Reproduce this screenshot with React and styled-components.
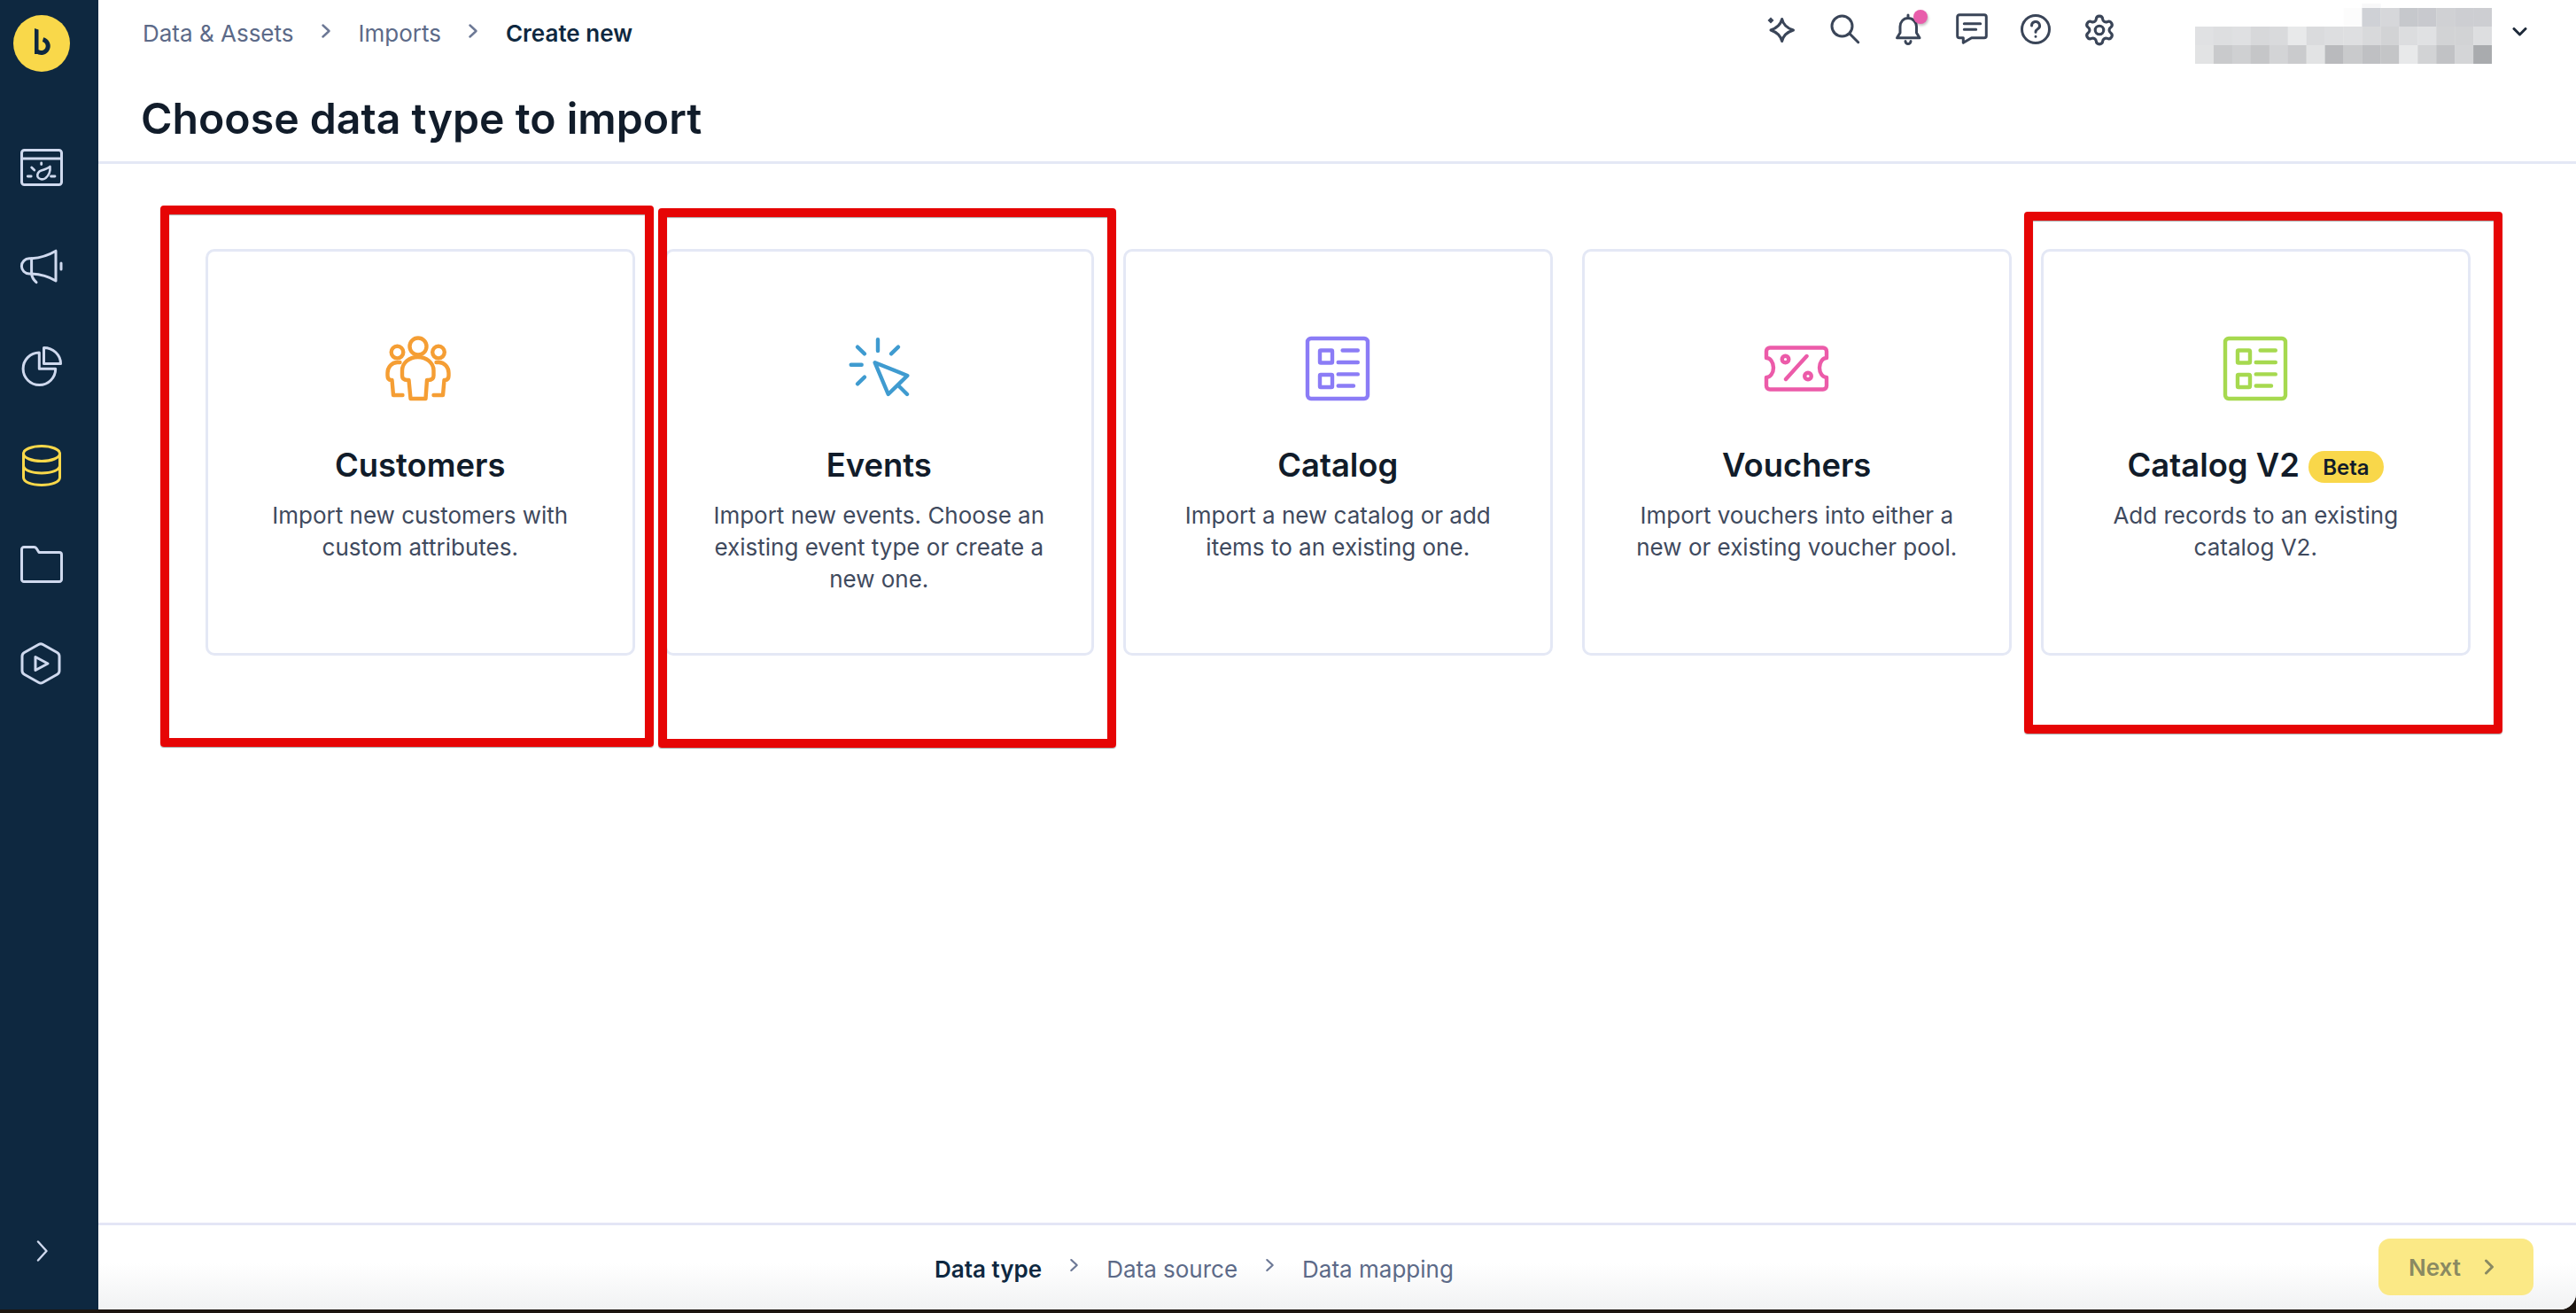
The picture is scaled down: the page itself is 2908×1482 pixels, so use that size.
import React from "react";
import styled, { createGlobalStyle } from "styled-components";
import { Settings } from "lucide-react";

const GlobalStyle = createGlobalStyle`
  html, body {
    margin: 0;
    height: 100%;
    background: #1c1510;
    font-family: "Inter", "Liberation Sans", sans-serif;
  }
  * { box-sizing: border-box; }
`;

const Shell = styled.div`
  position: relative;
  display: flex;
  width: 2908px;
  height: 1478px;
  background: #fff;
  border-bottom-right-radius: 18px;
  overflow: hidden;
`;

const Sidebar = styled.nav`
  width: 111px;
  flex-shrink: 0;
  background: #0e2840;
  display: flex;
  flex-direction: column;
  align-items: flex-start;
  padding: 17px 0 0 15px;
`;

const LogoMark = styled.svg`
  width: 64px;
  height: 64px;
  display: block;
  margin-bottom: 52px;
`;

const NavSlot = styled.div`
  width: 64px;
  height: 112px;
  display: flex;
  align-items: center;
  justify-content: center;
  color: ${(p) => (p.$active ? "#f9d84a" : "#cfd9ee")};

  svg {
    overflow: visible;
  }
`;

const Collapse = styled.div`
  margin-top: auto;
  margin-bottom: 54px;
  margin-left: 26px;
  height: 24px;
  color: #cfd9ee;
`;

const Main = styled.main`
  flex: 1;
  min-width: 0;
  display: flex;
  flex-direction: column;
`;

const Header = styled.header`
  height: 185px;
  border-bottom: 3px solid #e4e8f5;
  padding-left: 50px;
`;

const TopRow = styled.div`
  height: 74px;
  display: flex;
  align-items: flex-start;
`;

const Crumbs = styled.div`
  display: flex;
  align-items: center;
  height: 74px;
  font-size: 26px;
  color: #5c6a88;
`;

const Crumb = styled.span`
  font-weight: ${(p) => (p.$current ? 600 : 400)};
  color: ${(p) => (p.$current ? "#0e2840" : "#5c6a88")};
`;

const CrumbChevron = styled.svg`
  width: 12px;
  height: 16px;
  margin: -4px 31px 0 30px;
  color: #6c7895;
`;

const TopActions = styled.div`
  margin-left: auto;
  display: flex;
  align-items: center;
  height: 66px;
`;

const ActionSlot = styled.div`
  position: relative;
  width: 72px;
  height: 36px;
  display: flex;
  justify-content: center;
  color: #3a4558;
`;

const NotifyDot = styled.span`
  position: absolute;
  left: 42px;
  top: -4px;
  width: 16px;
  height: 16px;
  border-radius: 50%;
  background: #e85dab;
  box-shadow: 1px 2px 3px rgba(0, 0, 0, 0.25);
`;

const Mosaic = styled.svg`
  display: block;
  width: 335px;
  height: 72px;
  margin-left: 72px;
`;

const UserChevron = styled.svg`
  width: 17px;
  height: 10px;
  margin: 31px 55px 0 23px;
  color: #1e2a3a;
`;

const PageTitle = styled.h1`
  margin: 29px 0 0 -2px;
  font-size: 48.2px;
  line-height: 62px;
  font-weight: 600;
  color: #111c2a;
`;

const CardGrid = styled.section`
  flex: 1;
  display: grid;
  grid-template-columns: repeat(5, 485.5px);
  column-gap: 32.5px;
  align-content: start;
  padding: 96px 0 0 120.5px;
`;

const Card = styled.article`
  height: 459px;
  border: 3px solid #e4e8f5;
  border-radius: 10px;
  padding: 96px 44px 0;
  display: flex;
  flex-direction: column;
  align-items: center;
  text-align: center;
`;

const CardIcon = styled.svg`
  width: 72px;
  height: 72px;
  display: block;
  overflow: visible;
  color: ${(p) => p.$color};
  fill: none;
  stroke: currentColor;
  stroke-width: 4.4;
  stroke-linecap: round;
  stroke-linejoin: round;
`;

const CardTitle = styled.h2`
  margin: 50px 0 0;
  display: flex;
  align-items: center;
  gap: 10px;
  height: 46px;
  font-size: 36.4px;
  font-weight: 600;
  color: #111c2a;
`;

const BetaBadge = styled.span`
  display: inline-flex;
  align-items: center;
  justify-content: center;
  width: 85px;
  height: 36px;
  margin-top: 4px;
  border-radius: 18px;
  background: #f9d74a;
  font-size: 24px;
  font-weight: 600;
  color: #111c2a;
`;

const CardText = styled.p`
  margin: 16px 0 0;
  font-size: 26px;
  line-height: 36.2px;
  color: #3f4a5e;
`;

const Footer = styled.footer`
  height: 98px;
  flex-shrink: 0;
  border-top: 3px solid #e4e6f6;
  background: linear-gradient(to bottom, #fff 45%, #f1f2f3 100%);
  display: flex;
  align-items: center;
  padding: 0 48px 0 944px;
`;

const Steps = styled.div`
  display: flex;
  align-items: center;
  margin-top: 3px;
  font-size: 26px;
`;

const Step = styled.span`
  font-weight: ${(p) => (p.$current ? 600 : 400)};
  color: ${(p) => (p.$current ? "#0e2840" : "#5c6a88")};
`;

const StepChevron = styled.svg`
  width: 11px;
  height: 16px;
  margin: -8px 31px 0 31px;
  color: #6c7895;
`;

const NextButton = styled.button`
  margin-left: auto;
  margin-top: -1px;
  width: 175px;
  height: 64px;
  border: 0;
  border-radius: 13px;
  padding: 0 10px 0 0;
  background: #fbe986;
  color: #8a8a62;
  font-family: inherit;
  font-size: 26px;
  font-weight: 600;
  display: flex;
  align-items: center;
  justify-content: center;
  gap: 26px;
`;

const Annotation = styled.div`
  position: absolute;
  left: ${(p) => p.$x}px;
  top: ${(p) => p.$y}px;
  width: ${(p) => p.$w}px;
  height: ${(p) => p.$h}px;
  border: 10px solid #e60505;
  border-radius: 4px;
  box-shadow: 0 1px 1px rgba(0, 0, 0, 0.35), inset 0 1px 1px rgba(0, 0, 0, 0.35);
  pointer-events: none;
`;

const Line = ({ d, w = 3 }) => (
  <path d={d} fill="none" stroke="currentColor" strokeWidth={w} strokeLinecap="round" strokeLinejoin="round" />
);

const Chevron = ({ as: Comp, ...rest }) => (
  <Comp viewBox="0 0 12 16" {...rest}>
    <Line d="M2.5 1.5L9.5 8L2.5 14.5" w={2.4} />
  </Comp>
);

const CatalogIcon = ({ color }) => (
  <CardIcon viewBox="0 0 72 72" $color={color}>
    <rect x="2" y="2" width="68" height="68" rx="4" />
    <rect x="16" y="15.5" width="14" height="14" rx="1" />
    <rect x="16" y="43" width="14" height="14" rx="1" />
    <path d="M41.6 15.5H58.8M36.7 29H58.8M36.7 42.4H58.8M36.7 55.5H54" />
  </CardIcon>
);

const cards = [
  {
    title: "Customers",
    text: "Import new customers with custom attributes.",
    icon: (
      <CardIcon viewBox="2.5 0 72 72" $color="#f59e34">
        <circle cx="36.5" cy="11" r="9.5" />
        <circle cx="13" cy="17.6" r="6.8" />
        <circle cx="59.5" cy="17.6" r="6.8" />
        <path d="M18.5 44v-6a17.7 15 0 0 1 35.5 0v6q0 5-6 5h-1.5L45 70H28L26 49h-1.5q-6 0-6-5z" />
        <path d="M16 29h-3A11 12 0 0 0 2 41v3q0 5 4 5h1L8.5 66H19" />
        <path d="M57 29h3a11 12 0 0 1 11 12v3q0 5-4 5h-1L64.5 66H54" />
      </CardIcon>
    ),
  },
  {
    title: "Events",
    text: "Import new events. Choose an existing event type or create a new one.",
    icon: (
      <CardIcon viewBox="0 0 72 72" $color="#3f9bd0">
        <path d="M35 3.3V16M58 11.7L50 19.3M12 11.7L20 19.3M4.7 31.7H16.7M12 53.3L20 45.7" />
        <path d="M31.7 29.3L68.3 44L46.7 65z" />
        <path d="M58 55L68 65" />
      </CardIcon>
    ),
  },
  {
    title: "Catalog",
    text: "Import a new catalog or add items to an existing one.",
    icon: <CatalogIcon color="#8b7cf6" />,
  },
  {
    title: "Vouchers",
    text: "Import vouchers into either a new or existing voucher pool.",
    icon: (
      <CardIcon viewBox="0 0 72 72" $color="#ec5ba9">
        <path d="M6 12.5H66a4 4 0 0 1 4 4V24a8 11 0 0 0 0 22v9.5a4 4 0 0 1-4 4H6a4 4 0 0 1-4-4V46a8 11 0 0 0 0-22V16.5a4 4 0 0 1 4-4z" />
        <path d="M47.5 22L24 48" />
        <circle cx="23.5" cy="25.5" r="3.8" />
        <circle cx="49" cy="44.5" r="3.8" />
      </CardIcon>
    ),
  },
  {
    title: "Catalog V2",
    beta: true,
    text: "Add records to an existing catalog V2.",
    icon: <CatalogIcon color="#a6d94f" />,
  },
];

const mosaicRows = [
  [null, null, null, null, null, null, null, null, null, "#f8f8f9"],
  [null, null, null, null, null, null, null, null, "#fcfcfc", "#cfd1d6", "#d6d7da", "#c6c8cc", "#c8c9ce", "#d0d1d4", "#cdced2", "#cdced2"],
  ["#e0e1e3", "#dddee0", "#dfe0e2", "#d7d8da", "#d9dadc", "#e8e9ea", "#dadbdd", "#dddee0", "#dedfe1", "#d8d9db", "#d2d3d5", "#dcdddf", "#e0e1e3", "#d2d3d5", "#d2d3d5", "#dddee0"],
  ["#e2e3e4", "#c9cacc", "#cfd0d2", "#c5c6c8", "#d3d4d6", "#cacbcd", "#e2e3e4", "#b9babd", "#c9cacc", "#bfc0c3", "#c4c5c7", "#e8e9ea", "#d2d3d5", "#c1c2c5", "#d4d5d7", "#a9abae"],
];
const mosaicRowTop = [4, 9, 30, 51];
const mosaicRowH = [5, 21, 21, 21];

const annotations = [
  { x: 181, y: 232, w: 557, h: 611 },
  { x: 743, y: 235, w: 517, h: 609 },
  { x: 2285, y: 239, w: 540, h: 589 },
];

const App = () => (
  <>
    <GlobalStyle />
    <Shell>
      <Sidebar>
        <LogoMark viewBox="0 0 64 64">
          <circle cx="32" cy="32" r="32" fill="#f9d84a" />
          <path d="M24 15l4.5 1.6V44H24z" fill="#0e2840" />
          <path d="M33.5 27.6A7.6 7.6 0 1 1 27 41" fill="none" stroke="#0e2840" strokeWidth="5" />
        </LogoMark>
        <NavSlot>
          <svg width="48" height="42" viewBox="0 0 48 42">
            <rect x="1.5" y="1.5" width="45" height="39" rx="3" fill="none" stroke="currentColor" strokeWidth="3" />
            <Line d="M1.5 11H46.5" />
            <Line d="M8.3 31H12.2M34.5 31H39M12.7 21L15.8 24M23.7 16V17.5" w={2.8} />
            <Line d="M33.5 20C34 25 32 30 28.5 33C25 35.5 21 34.5 19.5 31.5C18.5 28.5 20.5 25.5 23.5 24.5C27 23.5 31 22 33.5 20z" w={2.6} />
          </svg>
        </NavSlot>
        <NavSlot>
          <svg width="48" height="38" viewBox="0 0 48 38">
            <Line d="M12.6 9.8C22 9 32 6 40 1.2V35C32 30 22 27.4 12.6 27H10A8.6 8.6 0 0 1 10 9.8z" />
            <Line d="M12.6 9.8V27C13 31 15 34 18 36.7M46 15V22" />
          </svg>
        </NavSlot>
        <NavSlot>
          <svg width="45" height="45" viewBox="0 0 45 45">
            <Line d="M19.3 7A18.3 18.3 0 1 0 37.7 25.3H19.3z" />
            <Line d="M24.5 1.5V19.5H43.5A19 18 0 0 0 24.5 1.5z" />
          </svg>
        </NavSlot>
        <NavSlot $active>
          <svg width="44" height="47" viewBox="0 0 44 47">
            <ellipse cx="22" cy="10" rx="20.5" ry="8.5" fill="none" stroke="currentColor" strokeWidth="3" />
            <Line d="M1.5 10V37c0 5 9 8.5 20.5 8.5S42.5 42 42.5 37V10M1.5 23.5c0 5 9 8.5 20.5 8.5s20.5-3.5 20.5-8.5" />
          </svg>
        </NavSlot>
        <NavSlot>
          <svg width="48" height="42" viewBox="0 0 48 42">
            <Line d="M4 1.5H15.5a3 3 0 0 1 2.5 1.3L21 7.5H44a2.5 2.5 0 0 1 2.5 2.5V38a2.5 2.5 0 0 1-2.5 2.5H4A2.5 2.5 0 0 1 1.5 38V4A2.5 2.5 0 0 1 4 1.5z" />
          </svg>
        </NavSlot>
        <NavSlot>
          <svg width="45" height="48" viewBox="1.5 0 45 48">
            <Line d="M20 2.5a5 5 0 0 1 5 0l16 9a5 5 0 0 1 2.5 4.3V32a5 5 0 0 1-2.5 4.3l-16 9a5 5 0 0 1-5 0l-16-9A5 5 0 0 1 1.5 32V15.8a5 5 0 0 1 2.5-4.3z" />
            <Line d="M16.5 16.5V31.5L30.5 24z" />
          </svg>
        </NavSlot>
        <Collapse>
          <svg width="14" height="24" viewBox="0 0 14 24">
            <Line d="M2 1.5L11.5 12L2 22.5" w={2.4} />
          </svg>
        </Collapse>
      </Sidebar>

      <Main>
        <Header>
          <TopRow>
            <Crumbs>
              <Crumb>Data &amp; Assets</Crumb>
              <Chevron as={CrumbChevron} />
              <Crumb>Imports</Crumb>
              <Chevron as={CrumbChevron} />
              <Crumb $current>Create new</Crumb>
            </Crumbs>
            <TopActions>
              <ActionSlot>
                <svg width="36" height="36" viewBox="0 0 36 36">
                  <Line d="M19.7 6.5C21 13 26 17 32.5 19C26 21 21 25 19.7 31.5C18 25 13 21 7 19C13 17 18 13 19.7 6.5z" />
                  <path d="M7 4.5L10.5 8L7 11.5L3.5 8z" fill="currentColor" />
                </svg>
              </ActionSlot>
              <ActionSlot>
                <svg width="36" height="36" viewBox="0 0 36 36">
                  <circle cx="15.5" cy="14.5" r="11.5" fill="none" stroke="currentColor" strokeWidth="3" />
                  <Line d="M24 23L33.7 32.7" />
                </svg>
              </ActionSlot>
              <ActionSlot>
                <svg width="36" height="36" viewBox="0 0 36 36">
                  <Line d="M18 5.5C12.5 5.5 9 10 9 15V22L5.5 27.7H31L27.5 22V15C27.5 10 23.5 5.5 18 5.5zM18 2V5.5M15 31.5a3 3 0 0 0 6 0" />
                </svg>
                <NotifyDot />
              </ActionSlot>
              <ActionSlot>
                <svg width="36" height="36" viewBox="0 0 36 36">
                  <Line d="M4 1.7H32a2.3 2.3 0 0 1 2.3 2.3V25.4a2.3 2.3 0 0 1-2.3 2.3H17.7L8.3 33.3V27.7H4a2.3 2.3 0 0 1-2.3-2.3V4A2.3 2.3 0 0 1 4 1.7z" />
                  <Line d="M9.3 11.7H27.7M9.3 18.3H22.7" />
                </svg>
              </ActionSlot>
              <ActionSlot>
                <svg width="36" height="36" viewBox="0 0 36 36">
                  <circle cx="18" cy="18" r="15.5" fill="none" stroke="currentColor" strokeWidth="3" />
                  <Line d="M13.5 14a4.5 4.5 0 1 1 6.8 3.8c-1.6 1-2.3 1.9-2.3 3.5M18 26.2V26.3" />
                </svg>
              </ActionSlot>
              <ActionSlot>
                <Settings size={38} strokeWidth={2} />
              </ActionSlot>
            </TopActions>
            <Mosaic viewBox="0 0 335 72">
              {mosaicRows.map((row, r) =>
                row.map((c, i) =>
                  c ? <rect key={`${r}-${i}`} x={i * 20.94} y={mosaicRowTop[r]} width="21.2" height={mosaicRowH[r]} fill={c} /> : null,
                ),
              )}
            </Mosaic>
            <UserChevron viewBox="0 0 17 10">
              <Line d="M2 1.5L8.5 8L15 1.5" />
            </UserChevron>
          </TopRow>
          <PageTitle>Choose data type to import</PageTitle>
        </Header>

        <CardGrid>
          {cards.map((card) => (
            <Card key={card.title}>
              {card.icon}
              <CardTitle>
                {card.title}
                {card.beta && <BetaBadge>Beta</BetaBadge>}
              </CardTitle>
              <CardText>{card.text}</CardText>
            </Card>
          ))}
        </CardGrid>

        <Footer>
          <Steps>
            <Step $current>Data type</Step>
            <Chevron as={StepChevron} />
            <Step>Data source</Step>
            <Chevron as={StepChevron} />
            <Step>Data mapping</Step>
          </Steps>
          <NextButton>
            Next
            <svg width="12" height="18" viewBox="0 0 12 18">
              <Line d="M2.5 2L9.5 9L2.5 16" />
            </svg>
          </NextButton>
        </Footer>
      </Main>

      {annotations.map((a) => (
        <Annotation key={a.x} $x={a.x} $y={a.y} $w={a.w} $h={a.h} />
      ))}
    </Shell>
  </>
);

export default App;
